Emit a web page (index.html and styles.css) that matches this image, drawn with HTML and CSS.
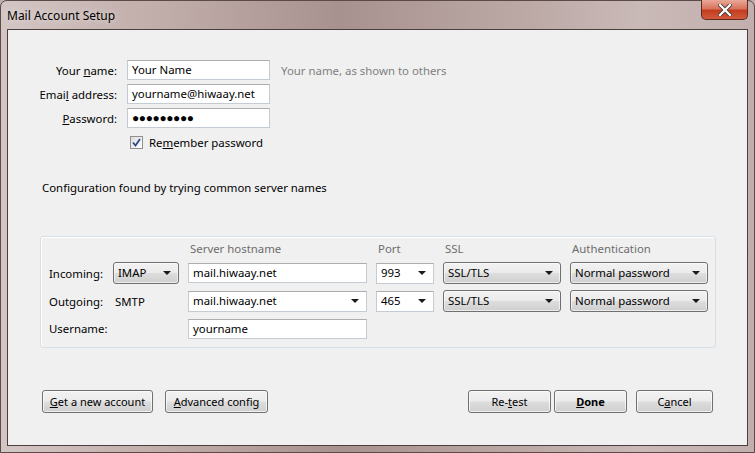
FILE: index.html
```html
<!DOCTYPE html>
<html lang="en">
<head>
    <meta charset="UTF-8">
    <title>Mail Account Setup</title>
    <link rel="stylesheet" href="styles.css">
</head>
<body>
    <div class="window">
        <div class="titlebar">
            <span class="title">Mail Account Setup</span>
            <button class="close-button" type="button">
                <svg width="14" height="12" viewBox="0 0 14 12">
                    <path d="M2 1 L12 11 M12 1 L2 11" stroke="#4a3a36" stroke-width="4" stroke-linecap="square"/>
                    <path d="M2 1 L12 11 M12 1 L2 11" stroke="#fff" stroke-width="2.2" stroke-linecap="square"/>
                </svg>
            </button>
        </div>
        <div class="client">
            <div class="identity">
                <label class="label">Your <u>n</u>ame:</label>
                <div class="field">Your Name</div>
                <span class="hint">Your name, as shown to others</span>

                <label class="label">Emai<u>l</u> address:</label>
                <div class="field">yourname@hiwaay.net</div>
                <span></span>

                <label class="label"><u>P</u>assword:</label>
                <div class="field dots">●●●●●●●●●</div>
                <span></span>

                <span></span>
                <label class="remember">
                    <span class="checkbox">
                        <svg width="9" height="9" viewBox="0 0 9 9"><path d="M1 4.5 L3.5 7.5 L8 1" fill="none" stroke="#2b4a8a" stroke-width="1.8"/></svg>
                    </span>
                    <span>Re<u>m</u>ember password</span>
                </label>
                <span></span>
            </div>

            <p class="status">Configuration found by trying common server names</p>

            <div class="server-box">
                <span></span>
                <span></span>
                <span class="col-head">Server hostname</span>
                <span class="col-head">Port</span>
                <span class="col-head">SSL</span>
                <span class="col-head">Authentication</span>

                <span class="row-label">Incoming:</span>
                <div class="dropdown button-like">IMAP<span class="arrow"></span></div>
                <div class="field">mail.hiwaay.net</div>
                <div class="field combo">993<span class="arrow"></span></div>
                <div class="dropdown button-like">SSL/TLS<span class="arrow"></span></div>
                <div class="dropdown button-like">Normal password<span class="arrow"></span></div>

                <span class="row-label">Outgoing:</span>
                <span class="plain">SMTP</span>
                <div class="field combo">mail.hiwaay.net<span class="arrow"></span></div>
                <div class="field combo">465<span class="arrow"></span></div>
                <div class="dropdown button-like">SSL/TLS<span class="arrow"></span></div>
                <div class="dropdown button-like">Normal password<span class="arrow"></span></div>

                <span class="row-label">Username:</span>
                <span></span>
                <div class="field user">yourname</div>
            </div>

            <div class="actions">
                <div class="action-group">
                    <button class="win-button wide" type="button"><u>G</u>et a new account</button>
                    <button class="win-button config" type="button"><u>A</u>dvanced config</button>
                </div>
                <div class="action-group right">
                    <button class="win-button retest" type="button">Re-<u>t</u>est</button>
                    <button class="win-button done" type="button"><u>D</u>one</button>
                    <button class="win-button cancel" type="button">C<u>a</u>ncel</button>
                </div>
            </div>
        </div>
    </div>
</body>
</html>
```

FILE: styles.css
```css
body {
    margin: 0;
    padding: 0;
    font-family: 'Noto Sans', sans-serif;
    font-size: 11.4px;
    color: #000;
    background: #bfaeac;
}
.window {
    box-sizing: border-box;
    width: 755px;
    height: 453px;
    display: flex;
    flex-direction: column;
    padding: 0 6px 6px 6px;
    border: 1px solid #5a4a48;
    border-radius: 7px 7px 0 0;
    background: linear-gradient(90deg, #d3c6c4 0%, #c2aeab 20%, #a89290 45%, #b8a4a1 65%, #c9b9b7 85%, #c2afad 100%);
}
.titlebar {
    height: 28px;
    display: flex;
    align-items: flex-start;
    justify-content: space-between;
}
.title {
    margin-top: 6px;
    font-size: 12px;
    color: #000;
    text-shadow: 0 0 6px rgba(255, 255, 255, 0.7);
}
.close-button {
    width: 47px;
    height: 20px;
    margin-top: -1px;
    padding: 0;
    border: 1px solid #5e2a20;
    border-top: none;
    border-radius: 0 0 5px 5px;
    background: linear-gradient(180deg, #e9a898 0%, #d9735d 45%, #c43c20 55%, #d05a3c 100%);
    display: flex;
    justify-content: center;
    align-items: center;
}
.client {
    flex: 1;
    border: 1px solid #4a3f3e;
    background: #f0f0f0;
}
.identity {
    display: grid;
    grid-template-columns: 109px 143px auto;
    grid-auto-rows: 20px;
    column-gap: 10px;
    row-gap: 4px;
    margin-top: 30px;
    align-items: center;
}
.label {
    text-align: right;
}
.field {
    box-sizing: border-box;
    height: 20px;
    border: 1px solid #c5cbd3;
    border-top-color: #abadb3;
    background: #fff;
    padding: 0 4px;
    line-height: 18px;
    white-space: nowrap;
    overflow: hidden;
    position: relative;
}
.dots {
    font-size: 12px;
    letter-spacing: -0.4px;
}
.hint {
    margin-left: 1px;
    color: #7f7f7f;
}
.remember {
    display: flex;
    align-items: center;
    gap: 6px;
    margin-left: 3px;
    white-space: nowrap;
}
.checkbox {
    box-sizing: border-box;
    flex: none;
    width: 13px;
    height: 13px;
    border: 1px solid #8f8f8f;
    background: linear-gradient(135deg, #dcdcdc, #fff);
    display: flex;
    justify-content: center;
    align-items: center;
}
.status {
    margin: 28px 0 0 34px;
}
.server-box {
    box-sizing: border-box;
    width: 676px;
    height: 112px;
    margin: 41px 0 0 32px;
    padding: 2px 0 0 8px;
    border: 1px solid #d5dfe5;
    border-radius: 3px;
    box-shadow: inset 1px 1px 0 #fff;
    display: grid;
    grid-template-columns: 55px 66px 179px 58px 118px 138px;
    grid-template-rows: 17px 22px 22px 21px;
    column-gap: 9px;
    row-gap: 6px;
    align-items: center;
}
.col-head {
    color: #6d6d6d;
    align-self: end;
    margin-left: 2px;
}
.plain {
    margin-left: 2px;
}
.user {
    align-self: end;
}
.dropdown {
    box-sizing: border-box;
    height: 22px;
    padding: 0 4px;
    line-height: 20px;
    position: relative;
    white-space: nowrap;
}
.button-like {
    border: 1px solid #707070;
    border-radius: 3px;
    background: linear-gradient(180deg, #f2f2f2 0%, #ebebeb 48%, #dddddd 52%, #cfcfcf 100%);
    box-shadow: inset 0 0 0 1px rgba(255, 255, 255, 0.6);
}
.combo {
    height: 21px;
}
.arrow {
    position: absolute;
    right: 7px;
    top: 50%;
    margin-top: -2px;
    width: 0;
    height: 0;
    border-left: 4px solid transparent;
    border-right: 4px solid transparent;
    border-top: 4px solid #1a1a1a;
}
.actions {
    display: flex;
    justify-content: space-between;
    margin: 42px 34px 0 34px;
}
.action-group {
    display: flex;
    gap: 12px;
}
.action-group.right {
    gap: 3px;
}
.win-button {
    box-sizing: border-box;
    height: 23px;
    padding: 0;
    font-family: 'Noto Sans', sans-serif;
    font-size: 11px;
    color: #000;
    border: 1px solid #707070;
    border-radius: 3px;
    background: linear-gradient(180deg, #f2f2f2 0%, #ebebeb 48%, #dddddd 52%, #cfcfcf 100%);
    box-shadow: inset 0 0 0 1px rgba(255, 255, 255, 0.7);
}
.wide {
    width: 111px;
}
.config {
    width: 103px;
}
.retest {
    width: 83px;
}
.done {
    width: 73px;
    font-weight: bold;
}
.cancel {
    width: 77px;
    margin-left: 6px;
}
```
